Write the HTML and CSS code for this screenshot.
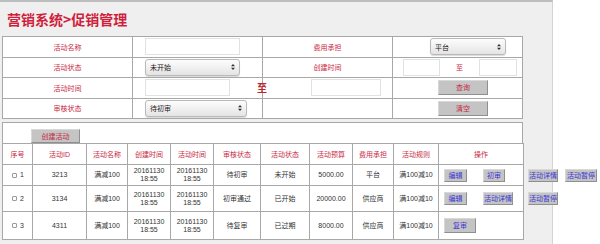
FILE: index.html
```html
<!DOCTYPE html>
<html lang="zh-CN">
<head>
    <meta charset="UTF-8">
    <title>促销管理</title>
    <link rel="stylesheet" href="styles.css">
</head>
<body>

<div class="page">
    <h1 class="title">营销系统&gt;促销管理</h1>

    <!-- 查询条件 -->
    <table class="filter">
        <colgroup><col><col><col><col></colgroup>
        <tr>
            <td class="label">活动名称</td>
            <td class="pad-a"><div class="input w95"></div></td>
            <td class="label">费用承担</td>
            <td class="pad-c">
                <div class="select w76"><span>平台</span><svg width="4" height="6" viewBox="0 0 4 6"><path d="M0 2.3 L2 0 L4 2.3Z M0 3.7 L2 6 L4 3.7Z" fill="#333"/></svg></div>
            </td>
        </tr>
        <tr>
            <td class="label">活动状态</td>
            <td class="pad-a">
                <div class="select w95"><span>未开始</span><svg width="4" height="6" viewBox="0 0 4 6"><path d="M0 2.3 L2 0 L4 2.3Z M0 3.7 L2 6 L4 3.7Z" fill="#333"/></svg></div>
            </td>
            <td class="label">创建时间</td>
            <td class="pad-d">
                <div class="range small">
                    <div class="input w37"></div>
                    <span class="to">至</span>
                    <div class="input w38"></div>
                </div>
            </td>
        </tr>
        <tr>
            <td class="label">活动时间</td>
            <td class="pad-a">
                <div class="range">
                    <div class="input w85"></div>
                    <span class="to big">至</span>
                </div>
            </td>
            <td class="pad-b"><div class="input w70"></div></td>
            <td class="pad-e"><button class="btn red wide">查询</button></td>
        </tr>
        <tr>
            <td class="label">审核状态</td>
            <td class="pad-a">
                <div class="select w102"><span>待初审</span><svg width="4" height="6" viewBox="0 0 4 6"><path d="M0 2.3 L2 0 L4 2.3Z M0 3.7 L2 6 L4 3.7Z" fill="#333"/></svg></div>
            </td>
            <td></td>
            <td class="pad-e"><button class="btn red wide">清空</button></td>
        </tr>
    </table>

    <div class="toolbar">
        <button class="btn red create">创建活动</button>
    </div>

    <!-- 活动列表 -->
    <table class="list">
        <colgroup>
            <col style="width:30px"><col style="width:54px"><col style="width:41px"><col style="width:43px">
            <col style="width:43px"><col style="width:47px"><col style="width:49px"><col style="width:43px">
            <col style="width:41px"><col style="width:45px"><col style="width:85px">
        </colgroup>
        <tr class="head">
            <th>序号</th><th>活动ID</th><th>活动名称</th><th>创建时间</th><th>活动时间</th><th>审核状态</th>
            <th>活动状态</th><th>活动预算</th><th>费用承担</th><th>活动规则</th><th>操作</th>
        </tr>
        <tr class="r1">
            <td class="no"><span class="check"></span>1</td>
            <td>3213</td><td>满减100</td><td>20161130<br>18:55</td><td>20161130<br>18:55</td>
            <td>待初审</td><td>未开始</td><td>5000.00</td><td>平台</td><td>满100减10</td>
            <td class="ops">
                <div class="ops-row">
                    <button class="btn blue">编辑</button>
                    <button class="btn blue short">初审</button>
                    <button class="btn blue long gap-l">活动详情</button>
                    <button class="btn blue longer gap-s">活动暂停</button>
                </div>
            </td>
        </tr>
        <tr class="r2">
            <td class="no"><span class="check"></span>2</td>
            <td>3134</td><td>满减100</td><td>20161130<br>18:55</td><td>20161130<br>18:55</td>
            <td>初审通过</td><td>已开始</td><td>20000.00</td><td>供应商</td><td>满100减10</td>
            <td class="ops">
                <div class="ops-row">
                    <button class="btn blue">编辑</button>
                    <button class="btn blue long">活动详情</button>
                    <button class="btn blue long gap-t">活动暂停</button>
                </div>
            </td>
        </tr>
        <tr class="r3">
            <td class="no"><span class="check"></span>3</td>
            <td>4311</td><td>满减100</td><td>20161130<br>18:55</td><td>20161130<br>18:55</td>
            <td>待复审</td><td>已过期</td><td>8000.00</td><td>供应商</td><td>满100减10</td>
            <td class="ops">
                <div class="ops-row">
                    <button class="btn blue tall">复审</button>
                </div>
            </td>
        </tr>
    </table>
</div>

</body>
</html>
```

FILE: styles.css
```css
* { margin: 0; padding: 0; box-sizing: border-box; }
body { background: #fff; font-family: "Liberation Sans", "Noto Sans CJK SC", sans-serif; color: #333; }
.page { width: 553px; height: 244px; background: #efefef; border-top: 2px solid #bdbdbd; border-right: 1px solid #d4d4d4; padding-left: 2px; }

.title { font-size: 14px; font-weight: bold; color: #cf1f3c; line-height: 18px; padding: 8px 0 0 5px; height: 34px; font-family: "Noto Sans CJK SC", sans-serif; }

table { border-collapse: collapse; table-layout: fixed; background: #fff; }
td, th { border: 1px solid #a8a8a8; font-size: 7px; font-weight: normal; }

/* 查询条件 */
.filter { width: 521px; }
.filter col { width: 130px; }
.filter td { height: 20.5px; padding: 0; vertical-align: middle; }
.filter .label { text-align: center; color: #c8283f; }
.pad-a { padding-left: 12px !important; }
.pad-b { padding-left: 48px !important; }
.pad-c { padding-left: 37px !important; }
.pad-d { padding-left: 10px !important; }
.pad-e { padding-left: 45px !important; }

.input { height: 17px; background: #fff; border: 1px solid #e2e2e2; flex-shrink: 0; }
.w37 { width: 37px; }
.w38 { width: 38px; }
.w70 { width: 70px; }
.w76 { width: 76px; }
.w85 { width: 85px; }
.w95 { width: 95px; }
.w102 { width: 102px; }

.select { height: 17px; display: flex; align-items: center; justify-content: space-between; padding: 0 4px; border: 1px solid #b9b9b9; border-radius: 3px; background: linear-gradient(#fdfdfd, #e4e4e4); color: #222; font-size: 7px; box-shadow: 0 1px 1px rgba(0, 0, 0, 0.15); }

.range { display: flex; align-items: center; white-space: nowrap; }
.range.small { gap: 16px; }
.range .to { color: #c8283f; font-size: 7px; flex-shrink: 0; }
.range .to.big { font-size: 10px; font-weight: bold; margin-left: 27px; color: #c0282f; }

.btn { display: inline-block; border: 1px solid; border-color: #d8d8d8 #8f8f8f #8f8f8f #d8d8d8; background: #c4c4c4; font-size: 7px; font-family: "Noto Sans CJK SC", sans-serif; height: 13px; line-height: 11px; text-align: center; vertical-align: middle; flex-shrink: 0; }
.btn.red { color: #c8283f; }
.btn.blue { color: #3a35d6; width: 23px; }
.btn.wide { width: 50px; height: 15px; line-height: 13px; }
.btn.short { width: 22px; }
.btn.long { width: 30px; }
.btn.longer { width: 32px; }
.btn.tall { width: 32px; height: 15px; line-height: 13px; }

/* 创建活动 */
.toolbar { width: 521px; height: 21px; margin-top: 3px; background: #fff; border: 1px solid #a8a8a8; border-bottom: none; padding: 3px 0 0 28px; }
.create { width: 49px; height: 14px; line-height: 12px; }

/* 活动列表 */
.list { width: 521px; }
.list th { color: #c8283f; height: 21px; text-align: center; vertical-align: middle; }
.list td { text-align: center; vertical-align: middle; line-height: 8px; color: #333; }
.list .r1 td { height: 21px; }
.list .r2 td { height: 26px; }
.list .r3 td { height: 28px; }
.list td.no { text-align: left; padding-left: 9px; }
.check { display: inline-block; width: 5px; height: 5px; border: 1px solid #9a9a9a; border-radius: 1px; margin-right: 3px; vertical-align: middle; background: #fff; }
.list td.ops { padding-left: 5px; }
.ops-row { display: flex; align-items: center; gap: 16px; white-space: nowrap; }
.ops-row .gap-l { margin-left: 7px; }
.ops-row .gap-s { margin-left: -9px; }
.ops-row .gap-t { margin-left: -1px; }
```
